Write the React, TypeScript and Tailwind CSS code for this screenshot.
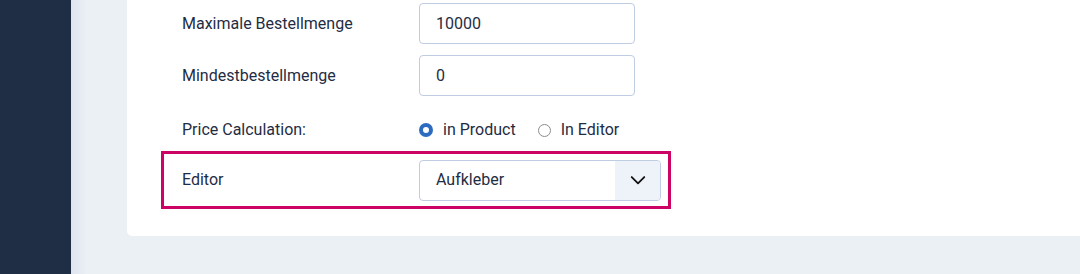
import React, { useState } from 'react';

const labelClass = 'w-[237px] shrink-0 text-[16px] text-[#1f2d44]';
const inputClass =
    'w-[216px] h-[41px] rounded-[4px] border border-[#bfcde2] bg-white px-4 text-[16px] text-[#1f2d44] outline-none';

const Radio: React.FC<{ checked: boolean; label: string; onClick: () => void }> = ({ checked, label, onClick }) => (
    <label className="flex items-center cursor-pointer" onClick={onClick}>
        {checked ? (
            <span className="w-[14px] h-[14px] rounded-full border-[4px] border-[#2c6bc0] bg-white" />
        ) : (
            <span className="w-[13px] h-[13px] rounded-full border border-[#8c8c8c] bg-white" />
        )}
        <span className="ml-[10px] text-[16px] text-[#1f2d44]">{label}</span>
    </label>
);

const App: React.FC = () => {
    const [maxQty, setMaxQty] = useState<string>('10000');
    const [minQty, setMinQty] = useState<string>('0');
    const [calc, setCalc] = useState<'product' | 'editor'>('product');

    return (
        <div className="flex w-[1080px] h-[274px] overflow-hidden bg-[#ebf0f5]" style={{ fontFamily: 'Roboto, "Noto Sans", sans-serif' }}>
            <div className="w-[71px] shrink-0 bg-[#1f2e45]" />
            <div className="relative flex-1">
                <div className="absolute left-0 top-0 h-full w-[16px] bg-gradient-to-r from-[#dfe5ef] to-[#ebf0f5]" />
                <div className="relative ml-[56px] h-[236px] rounded-bl-[5px] bg-white pl-[34px] pt-[3px]">
                    <div className="flex items-center pl-[21px]">
                        <span className={labelClass}>Maximale Bestellmenge</span>
                        <input className={inputClass} value={maxQty} onChange={(e) => setMaxQty(e.target.value)} />
                    </div>
                    <div className="mt-[11px] flex items-center pl-[21px]">
                        <span className={labelClass}>Mindestbestellmenge</span>
                        <input className={inputClass} value={minQty} onChange={(e) => setMinQty(e.target.value)} />
                    </div>
                    <div className="mt-[24px] flex h-[20px] items-center pl-[21px]">
                        <span className={labelClass}>Price Calculation:</span>
                        <div className="flex items-center gap-[22px]">
                            <Radio checked={calc === 'product'} label="in Product" onClick={() => setCalc('product')} />
                            <Radio checked={calc === 'editor'} label="In Editor" onClick={() => setCalc('editor')} />
                        </div>
                    </div>
                    <div className="mt-[11px] flex h-[58px] w-[510px] items-center border-[3px] border-[#cc0565] pl-[18px]">
                        <span className={labelClass}>Editor</span>
                        <div className="flex h-[41px] w-[242px] overflow-hidden rounded-[4px] border border-[#bfcde2]">
                            <div className="flex flex-1 items-center px-4 text-[16px] text-[#1f2d44]">Aufkleber</div>
                            <div className="flex w-[45px] items-center justify-center bg-[#eef3fa]">
                                <svg width="20" height="20" viewBox="0 0 24 24" fill="none" stroke="#111" strokeWidth="2.2" strokeLinecap="round" strokeLinejoin="round">
                                    <path d="M4.5 8.5l7.5 7.5 7.5-7.5" />
                                </svg>
                            </div>
                        </div>
                    </div>
                </div>
            </div>
        </div>
    );
};

export default App;
